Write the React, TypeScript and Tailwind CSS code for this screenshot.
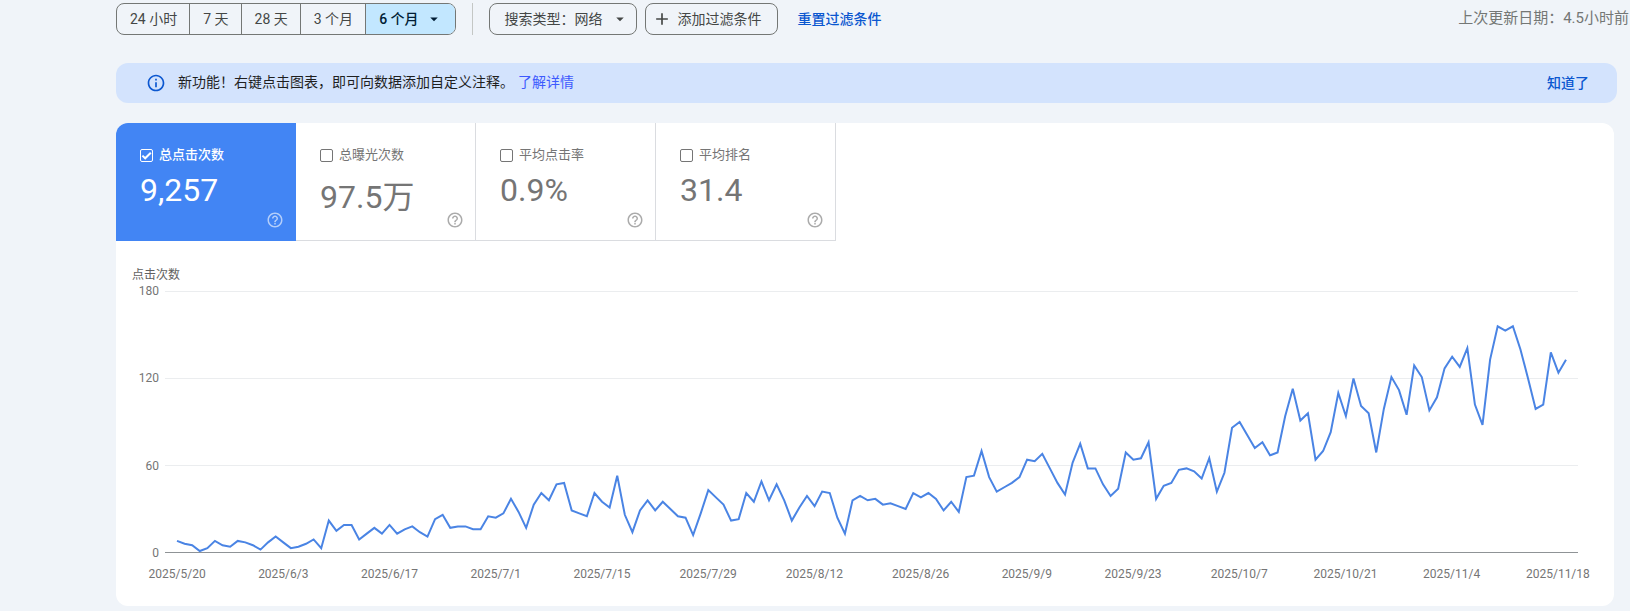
import { useState } from 'react';
import clsx from 'clsx';
import { MdAdd, MdArrowDropDown, MdHelpOutline, MdOutlineInfo } from 'react-icons/md';

const RANGES = ['24 小时', '7 天', '28 天', '3 个月', '6 个月'];

const METRICS = [
  { id: 'clicks', label: '总点击次数', value: '9,257' },
  { id: 'impressions', label: '总曝光次数', value: '97.5万' },
  { id: 'ctr', label: '平均点击率', value: '0.9%' },
  { id: 'position', label: '平均排名', value: '31.4' },
];

// Daily clicks, 2025/5/20 - 2025/11/19
const CLICKS = [
  8, 6, 5, 1, 3, 8, 5, 4, 8, 7, 5, 2, 7, 11, 7, 3, 4, 6, 9, 3, 22, 15, 19, 19, 9, 13, 17, 13, 19,
  13, 16, 18, 14, 11, 23, 26, 17, 18, 18, 16, 16, 25, 24, 27, 37, 28, 17, 33, 41, 36, 47, 48, 29,
  27, 25, 41, 35, 31, 53, 26, 14, 29, 36, 29, 35, 30, 25, 24, 12, 27, 43, 38, 33, 22, 23, 41, 35,
  49, 36, 47, 36, 22, 31, 39, 32, 42, 41, 24, 13, 36, 39, 36, 37, 33, 34, 32, 30, 41, 38, 41, 37,
  29, 35, 28, 52, 53, 70, 52, 42, 45, 48, 52, 64, 63, 68, 58, 48, 40, 62, 75, 58, 58, 47, 39, 44,
  69, 64, 65, 76, 37, 46, 48, 57, 58, 56, 51, 65, 42, 55, 86, 90, 81, 72, 76, 67, 69, 94, 113, 91,
  96, 64, 70, 83, 110, 94, 120, 101, 96, 69, 99, 121, 112, 95, 129, 121, 98, 107, 127, 135, 128,
  141, 102, 88, 133, 156, 153, 156, 140, 120, 99, 102, 138, 124, 133,
];

const Y_TICKS = [180, 120, 60, 0];

const X_TICKS = [
  '2025/5/20', '2025/6/3', '2025/6/17', '2025/7/1', '2025/7/15', '2025/7/29', '2025/8/12',
  '2025/8/26', '2025/9/9', '2025/9/23', '2025/10/7', '2025/10/21', '2025/11/4', '2025/11/18',
];

const PLOT_WIDTH = 1413;
const PLOT_HEIGHT = 262;
const PLOT_INSET = 12;

function toY(value: number) {
  return PLOT_HEIGHT - 0.5 - (value / 180) * (PLOT_HEIGHT - 1);
}

function Toolbar() {
  const [range, setRange] = useState('6 个月');

  return (
    <div className="flex items-center pl-[116px] pr-px pt-[3px] text-sm text-[#444746]">
      <div className="flex h-8 shrink-0 overflow-hidden rounded-lg border border-[#747775]">
        {RANGES.map((item) => (
          <button
            key={item}
            type="button"
            onClick={() => setRange(item)}
            className={clsx(
              'flex items-center border-r border-[#747775] pl-[13px] pr-3 last:border-r-0',
              range === item && 'bg-[#c2e7ff] font-medium text-[#001d35]'
            )}
          >
            {item}
            {item === '6 个月' && <MdArrowDropDown className="ml-1.5 h-[18px] w-[18px]" />}
          </button>
        ))}
      </div>

      <div className="mx-4 h-8 w-px shrink-0 bg-[#c4c7c5]" />

      <button
        type="button"
        className="flex h-8 shrink-0 items-center rounded-lg border border-[#747775] pl-[15px] pr-[7px]"
      >
        搜索类型：网络
        <MdArrowDropDown className="ml-2 h-[18px] w-[18px]" />
      </button>
      <button
        type="button"
        className="ml-2 flex h-8 shrink-0 items-center gap-1.5 rounded-lg border border-[#747775] pl-1.5 pr-[15px]"
      >
        <MdAdd className="h-5 w-5" />
        添加过滤条件
      </button>
      <button type="button" className="ml-5 shrink-0 font-medium text-[#0b57d0]">
        重置过滤条件
      </button>

      <div className="ml-auto shrink-0 text-[15px] text-[#747775]">上次更新日期：4.5小时前</div>
    </div>
  );
}

function Banner() {
  return (
    <div className="ml-[116px] mr-[13px] mt-7 flex h-10 items-center rounded-xl bg-[#d3e3fd] pl-[30px] pr-7 text-sm text-[#1f1f1f]">
      <MdOutlineInfo className="h-5 w-5 text-[#0b57d0]" />
      <p className="ml-3 pb-0.5">
        新功能！右键点击图表，即可向数据添加自定义注释。
        <a href="#annotations" className="ml-1 text-[#3d5afe]">
          了解详情
        </a>
      </p>
      <button type="button" className="ml-auto font-medium text-[#0b57d0]">
        知道了
      </button>
    </div>
  );
}

type MetricProps = {
  id: string;
  label: string;
  value: string;
  checked: boolean;
  onToggle: () => void;
};

function MetricTile({ id, label, value, checked, onToggle }: MetricProps) {
  return (
    <div
      className={clsx(
        'flex h-[118px] w-[180px] border-b border-r pb-[11px] pl-6 pr-[11px] pt-[22px]',
        checked ? 'border-[#4285f4] bg-[#4285f4] text-white' : 'border-[#dadce0] text-[#757575]'
      )}
    >
      <div className="flex-1">
        <div className="flex items-center gap-1.5">
          <span className="grid">
            <input
              id={id}
              type="checkbox"
              checked={checked}
              onChange={onToggle}
              className="col-start-1 row-start-1 h-[13px] w-[13px] appearance-none rounded-xs border border-current"
            />
            {checked && (
              <svg
                viewBox="0 0 13 13"
                className="pointer-events-none col-start-1 row-start-1 h-[13px] w-[13px]"
                fill="none"
                stroke="currentColor"
                strokeWidth="2"
              >
                <path d="M2.4 6.6 L5.2 9.3 L10.8 3.7" />
              </svg>
            )}
          </span>
          <label htmlFor={id} className={clsx('text-[13px] leading-5', checked && 'font-medium')}>
            {label}
          </label>
        </div>
        {/* Line height comes from the font, so a value with 万 sits a little lower */}
        <div className="mt-1.5 text-[32px] leading-[normal]">{value}</div>
      </div>
      <MdHelpOutline className="h-[18px] w-[18px] shrink-0 self-end opacity-60" />
    </div>
  );
}

function ClicksChart() {
  const step = (PLOT_WIDTH - PLOT_INSET * 2) / (CLICKS.length - 1);
  const points = CLICKS.map((value, i) => `${PLOT_INSET + i * step},${toY(value)}`).join(' ');

  return (
    <div className="pb-6 pt-[26px] text-xs text-[#757575]">
      <div className="pl-4 leading-4 text-[#616161]">点击次数</div>
      <div className="flex pr-9">
        <div className="flex w-[43px] shrink-0 flex-col justify-between text-right leading-4">
          {Y_TICKS.map((tick) => (
            <span key={tick}>{tick}</span>
          ))}
        </div>
        <svg
          viewBox={`0 0 ${PLOT_WIDTH} ${PLOT_HEIGHT}`}
          preserveAspectRatio="none"
          className="my-2 ml-1.5 h-[262px] min-w-0 flex-1"
          role="img"
          aria-label="点击次数"
        >
          {Y_TICKS.map((tick) => (
            <line
              key={tick}
              x1="0"
              x2={PLOT_WIDTH}
              y1={toY(tick)}
              y2={toY(tick)}
              stroke={tick === 0 ? '#8f9396' : '#ebedef'}
              vectorEffect="non-scaling-stroke"
            />
          ))}
          <polyline
            points={points}
            fill="none"
            stroke="#4a84e4"
            strokeWidth="2"
            vectorEffect="non-scaling-stroke"
          />
        </svg>
      </div>
      <div className="mt-[5px] grid grid-cols-14 pl-2 pr-[3px] text-center leading-4">
        {X_TICKS.map((tick) => (
          <span key={tick}>{tick}</span>
        ))}
      </div>
    </div>
  );
}

export default function App() {
  const [selected, setSelected] = useState<string[]>(['clicks']);

  function toggleMetric(id: string) {
    setSelected((prev) => (prev.includes(id) ? prev.filter((m) => m !== id) : [...prev, id]));
  }

  return (
    <main className="min-h-screen bg-[#f0f4f9] font-[Roboto,'Noto_Sans_CJK_SC',sans-serif]">
      <Toolbar />
      <Banner />

      {/* Performance card */}
      <div className="ml-[116px] mr-4 mt-5 overflow-hidden rounded-xl bg-white">
        <div className="flex">
          {METRICS.map((metric) => (
            <MetricTile
              key={metric.id}
              {...metric}
              checked={selected.includes(metric.id)}
              onToggle={() => toggleMetric(metric.id)}
            />
          ))}
        </div>
        <ClicksChart />
      </div>
    </main>
  );
}
